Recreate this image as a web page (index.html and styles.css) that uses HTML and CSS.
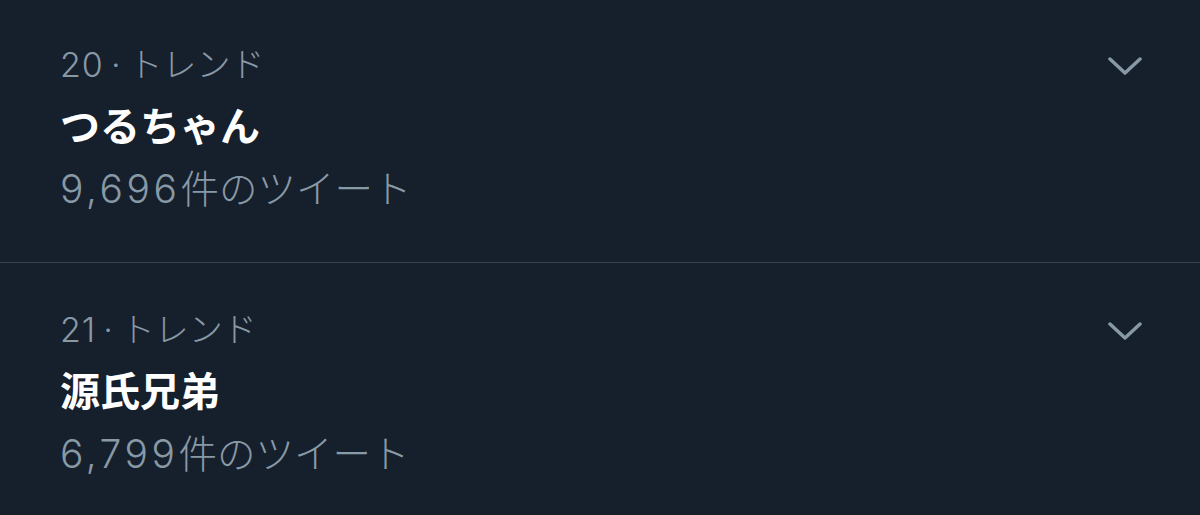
FILE: index.html
```html
<!DOCTYPE html>
<html lang="ja">
<head>
  <meta charset="UTF-8">
  <meta name="viewport" content="width=device-width, initial-scale=1.0">
  <title>トレンド</title>
  <link rel="stylesheet" href="styles.css">
</head>
<body>
  <div class="trends">
    <div class="trend">
      <div class="trend-text">
        <div class="meta"><span class="num">20</span><span class="dot">·</span>トレンド</div>
        <div class="name">つるちゃん</div>
        <div class="count"><span class="num">9,696</span>件のツイート</div>
      </div>
      <svg class="caret" width="34" height="20" viewBox="0 0 34 20">
        <path d="M2 3 L17 17 L32 3" fill="none" stroke="#8899a6" stroke-width="3.5" stroke-linecap="round" stroke-linejoin="round"/>
      </svg>
    </div>
    <div class="trend">
      <div class="trend-text">
        <div class="meta"><span class="num">21</span><span class="dot">·</span>トレンド</div>
        <div class="name">源氏兄弟</div>
        <div class="count"><span class="num">6,799</span>件のツイート</div>
      </div>
      <svg class="caret" width="34" height="20" viewBox="0 0 34 20">
        <path d="M2 3 L17 17 L32 3" fill="none" stroke="#8899a6" stroke-width="3.5" stroke-linecap="round" stroke-linejoin="round"/>
      </svg>
    </div>
  </div>
</body>
</html>
```

FILE: styles.css
```css
body {
  margin: 0;
  background-color: #161f2c;
  font-family: Inter, "Noto Sans CJK JP", sans-serif;
  overflow: hidden;
}
.trends {
  margin-top: -2px;
}
.trend {
  display: flex;
  justify-content: space-between;
  align-items: flex-start;
  padding: 36px 58px 42px 60px;
  border-bottom: 1px solid #38434f;
}
.meta {
  font-size: 34px;
  line-height: 62px;
  font-weight: 300;
  color: #8899a6;
}
.meta .num {
  letter-spacing: 1px;
}
.dot {
  margin: 0 8px 0 7px;
}
.name {
  font-size: 40px;
  line-height: 62px;
  font-weight: bold;
  color: #ffffff;
}
.count {
  font-size: 38.5px;
  line-height: 62px;
  font-weight: 300;
  color: #8899a6;
}
.count .num {
  font-size: 39px;
  letter-spacing: 3.5px;
}
.caret {
  margin-top: 22px;
}
```
